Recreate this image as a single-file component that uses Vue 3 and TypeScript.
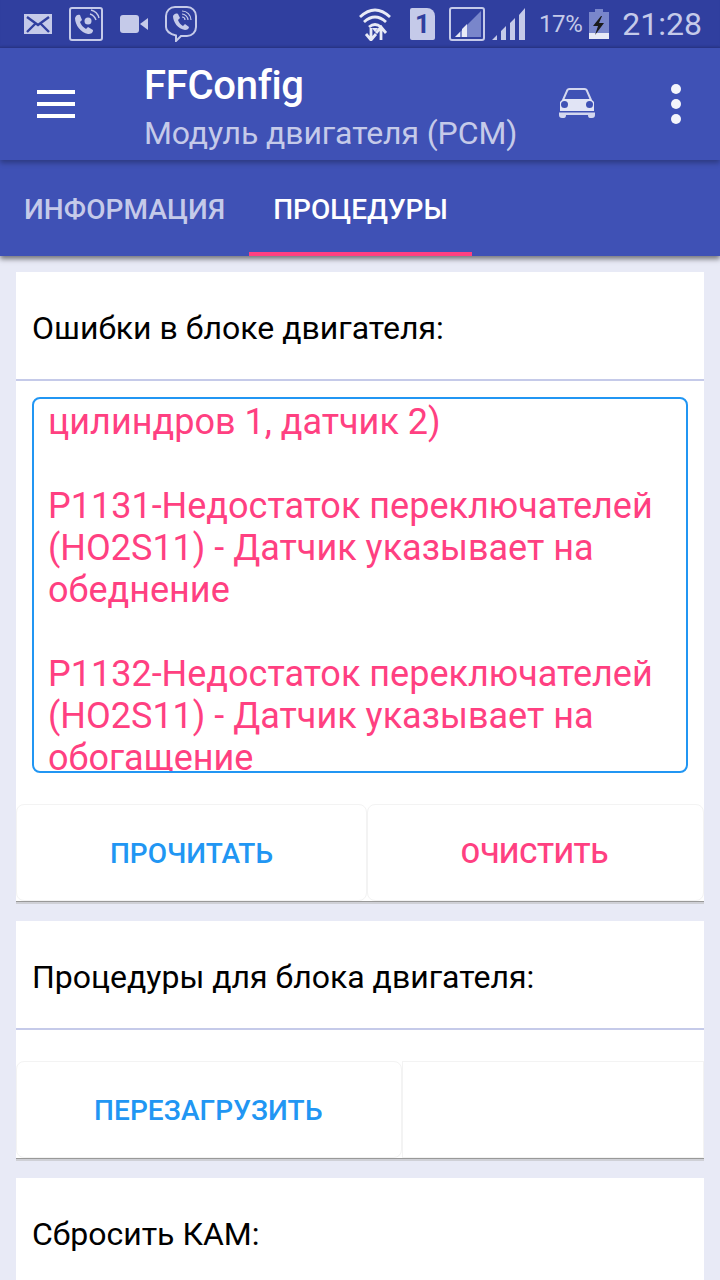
<script setup lang="ts">
const errorLines: string[] = [
  'цилиндров 1, датчик 2)',
  '',
  'P1131-Недостаток переключателей',
  '(HO2S11) - Датчик указывает на',
  'обеднение',
  '',
  'P1132-Недостаток переключателей',
  '(HO2S11) - Датчик указывает на',
  'обогащение',
]
</script>

<template>
  <div class="screen">
    <div class="status">
      <div class="status-left">
        <svg width="28" height="20" viewBox="0 0 28 20"><rect width="28" height="20" fill="#c5cae9"/><path d="M3 3l11 8 11-8M3 18l8-8M25 18l-8-8" fill="none" stroke="#303f9f" stroke-width="2.4"/></svg>
        <svg width="34" height="34" viewBox="0 0 34 34"><rect x="1" y="1" width="32" height="32" rx="2" fill="none" stroke="#c5cae9" stroke-width="2"/><path d="M6 11c1-3 3-4 5-3l2 5-2 2c1 3 3 5 6 7l2-2 5 3c0 3-2 4-5 4C12 26 6 18 6 11z" fill="#c5cae9"/><circle cx="19" cy="14" r="3.500" fill="#c5cae9"/><path d="M21 7c3 1 5 3 6 6M22 3c4 1 7 4 8 8" fill="none" stroke="#c5cae9" stroke-width="1.400"/></svg>
        <svg width="28" height="18" viewBox="0 0 28 18"><rect width="19" height="18" rx="3" fill="#c5cae9"/><path d="M20 9l8-6v12z" fill="#c5cae9"/></svg>
        <svg width="32" height="36" viewBox="0 0 32 36"><path d="M10 1h12c5 0 9 4 9 9v11c0 5-4 9-9 9h-6l-5 5v-5.500C5 28 1 26 1 21V10c0-5 4-9 9-9z" fill="none" stroke="#c5cae9" stroke-width="2"/><path d="M8 10c1-2 3-3 5-2l2 4-2 2c1 3 3 5 5 6l2-2 4 3c0 2-2 3-4 3C13 23 8 16 8 10z" fill="#c5cae9"/><path d="M17 8c3 0 6 3 6 6M17 11c2 0 3 1 3 3M17 5c5 0 9 4 9 9" fill="none" stroke="#c5cae9" stroke-width="1.200"/></svg>
      </div>
      <div class="status-right">
        <svg width="34" height="34" viewBox="0 0 34 34"><path d="M1 10Q16-4 31 10M5 15Q16 5 27 15M10 20Q16 15 22 20" fill="none" stroke="#e8eaf6" stroke-width="2.800"/><path d="M16 25l-3-4h6z" fill="#e8eaf6"/><path d="M12 21v11M7 27l5 6 5-6M22 33V21M17 26l5-6 5 6" fill="none" stroke="#e8eaf6" stroke-width="2.800"/></svg>
        <div class="sim">1</div>
        <svg width="36" height="34" viewBox="0 0 36 34"><rect x="1" y="1" width="34" height="32" rx="2" fill="none" stroke="#c5cae9" stroke-width="2"/><path d="M32 4v26H6z" fill="#7986cb"/><path d="M6 30l5-5v5zM13 30v-8l5-5v13z" fill="#e8eaf6"/></svg>
        <svg width="34" height="32" viewBox="0 0 34 32"><path d="M0 32l5-5v5zM9 32v-9l5-5v14zM18 32V15l5-5v22zM27 32V7l6-7v32z" fill="#c5cae9"/></svg>
        <span class="pct">17%</span>
        <svg width="20" height="30" viewBox="0 0 20 30"><path d="M6 0h8v3h6v27H0V3h6z" fill="#7986cb"/><rect y="24" width="20" height="6" fill="#e8eaf6"/><path d="M12 7L4 17h5l-3 9 9-12h-5l3-7z" fill="#1a1a1a"/></svg>
        <span class="clock">21:28</span>
      </div>
    </div>

    <header class="appbar">
      <div class="burger"><i></i><i></i><i></i></div>
      <div class="titles">
        <div class="title">FFConfig</div>
        <div class="subtitle">Модуль двигателя (PCM)</div>
      </div>
      <svg class="car" width="36" height="30" viewBox="0 0 36 30"><path d="M4 12L8 3Q8.500 1 10.500 1H25.500Q27.500 1 28 3L32 12" fill="none" stroke="#d3d7ef" stroke-width="2"/><path d="M4 11H32L35 14V23H1V14z" fill="#e1e4f5"/><path d="M0 24.500H36V27Q36 30 33 30H31Q29 30 29 27H7Q7 30 5 30H3Q0 30 0 27z" fill="#d3d7ef"/><circle cx="5.500" cy="16.500" r="3.500" fill="#3f51b5"/><circle cx="30.500" cy="16.500" r="3.500" fill="#3f51b5"/></svg>
      <div class="dots"><i></i><i></i><i></i></div>
    </header>

    <nav class="tabs">
      <div class="tab first-tab">ИНФОРМАЦИЯ</div>
      <div class="tab active">ПРОЦЕДУРЫ</div>
    </nav>

    <main class="content">
      <section class="card">
        <div class="heading">Ошибки в блоке двигателя:</div>
        <div class="errors-wrap">
          <div class="errors">
            <div v-for="(line, i) in errorLines" :key="i" class="err-line">{{ line }}</div>
          </div>
        </div>
        <div class="actions">
          <button class="btn half blue">ПРОЧИТАТЬ</button>
          <button class="btn half2 pink">ОЧИСТИТЬ</button>
        </div>
      </section>

      <section class="card">
        <div class="heading">Процедуры для блока двигателя:</div>
        <div class="actions">
          <button class="btn wide blue">ПЕРЕЗАГРУЗИТЬ</button>
          <div class="btn rest"></div>
        </div>
      </section>

      <section class="card last">
        <div class="heading plain">Сбросить КАМ:</div>
      </section>
    </main>
  </div>
</template>

<style scoped>
.screen {
  width: 720px;
  height: 1280px;
  overflow: hidden;
  background: #e8eaf6;
  font-family: Roboto, "Noto Sans", sans-serif;
  display: flex;
  flex-direction: column;
}
.status {
  height: 48px;
  flex: none;
  background: #303f9f;
  display: flex;
  justify-content: space-between;
  align-items: center;
  padding: 0 18px 0 24px;
  box-shadow: inset 0 -3px 3px -2px rgba(0, 0, 0, 0.2);
}
.status-left, .status-right { display: flex; align-items: center; }
.status-left { gap: 17px; }
.status-right { gap: 0; }
.sim {
  width: 25px;
  height: 32px;
  margin-left: 17px;
  background: #c5cae9;
  border-radius: 2px 8px 2px 2px;
  color: #303f9f;
  font-size: 26px;
  font-weight: 700;
  line-height: 32px;
  text-align: center;
}
.sim + svg { margin-left: 14px; }
.sim + svg + svg { margin-left: 7px; }
.pct { font-size: 24px; color: #c5cae9; letter-spacing: -0.4px; margin-left: 13px; }
.pct + svg { margin-left: 7px; }
.clock { font-size: 32px; color: #c5cae9; margin-left: 13px; }
.appbar {
  height: 112px;
  flex: none;
  background: #3f51b5;
  display: flex;
  align-items: center;
  position: relative;
  z-index: 2;
  box-shadow: 0 3px 5px rgba(0, 0, 0, 0.28);
}
.burger { width: 38px; margin-left: 37px; display: flex; flex-direction: column; gap: 8px; }
.burger i { height: 4px; background: #fff; display: block; }
.titles { margin-left: 69px; flex: 1; padding-top: 8px; }
.title { font-size: 40px; font-weight: 500; color: #fff; line-height: 47px; letter-spacing: -0.3px; }
.subtitle { font-size: 32px; color: #c5cae9; line-height: 42px; margin-top: 3px; letter-spacing: -0.1px; }
.car { margin-right: 76px; margin-top: -2px; }
.dots { margin-right: 39px; display: flex; flex-direction: column; gap: 5px; width: 10px; }
.dots i { width: 10px; height: 10px; border-radius: 50%; background: #f4f5fb; display: block; }
.tabs {
  height: 96px;
  flex: none;
  background: #3f51b5;
  display: flex;
  position: relative;
  z-index: 1;
  box-shadow: 0 3px 5px rgba(0, 0, 0, 0.5);
}
.tab {
  padding: 0 24px;
  line-height: 100px;
  height: 96px;
  box-sizing: border-box;
  font-size: 28px;
  font-weight: 500;
  color: #c5cae9;
}
.first-tab { letter-spacing: 0.1px; }
.tab.active { color: #fff; border-bottom: 4px solid #ff4081; }
.content { padding: 16px 16px 0; display: flex; flex-direction: column; gap: 20px; }
.card { background: #fff; flex: none; }
.heading {
  height: 109px;
  box-sizing: border-box;
  padding: 34px 16px 0;
  font-size: 32px;
  line-height: 44px;
  color: #000;
  border-bottom: 2px solid #c5cae9;
}
.heading.plain { border-bottom: 0; }
.errors-wrap { padding: 16px 16px 0; }
.errors {
  height: 376px;
  box-sizing: border-box;
  border: 2px solid #2196f3;
  border-radius: 8px;
  padding: 2px 14px 0;
  overflow: hidden;
}
.err-line { font-size: 36px; line-height: 42px; height: 42px; color: #ff4081; white-space: nowrap; }
.actions { display: flex; height: 97px; margin-top: 31px; box-shadow: 0 1px 0 #999, 0 3px 0 #cfd0d6; }
.btn {
  border: 1px solid #f3f3f3;
  box-sizing: border-box;
  background: #fff;
  font-family: inherit;
  font-size: 28px;
  font-weight: 500;
  padding: 2px 0 0;
  border-radius: 8px;
}
.half { width: 351px; }
.half2 { width: 337px; padding-right: 2px; }
.wide { width: 386px; text-align: left; padding-left: 77px; letter-spacing: 0.1px; }
.rest { flex: 1; border-radius: 0; }
.blue { color: #2196f3; }
.pink { color: #ff4081; }
</style>
